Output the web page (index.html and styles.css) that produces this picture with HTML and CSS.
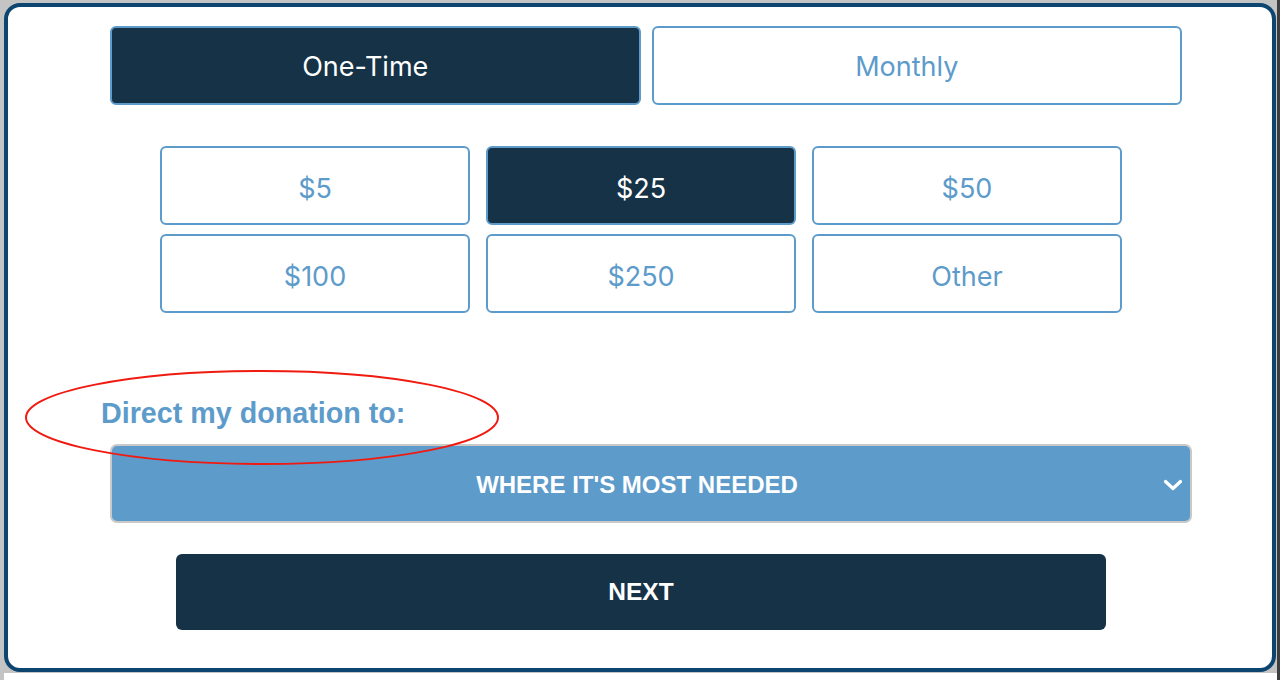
FILE: index.html
```html
<!DOCTYPE html>
<html lang="en">
<head>
<meta charset="utf-8">
<title>Donate</title>
<link rel="stylesheet" href="styles.css">
</head>
<body>
<div class="page">
  <div class="modal">
    <div class="freq">
      <button class="freq-btn is-active">One-Time</button>
      <button class="freq-btn">Monthly</button>
    </div>
    <div class="amounts">
      <button class="amount">$5</button>
      <button class="amount is-active">$25</button>
      <button class="amount">$50</button>
      <button class="amount">$100</button>
      <button class="amount">$250</button>
      <button class="amount">Other</button>
    </div>
    <div class="label">Direct my donation to:</div>
    <div class="select">
      <span class="select-text">WHERE IT'S MOST NEEDED</span>
      <svg class="chevron" width="20" height="12" viewBox="0 0 20 12"><path d="M2.5 2.5 L10 9.5 L17.5 2.5" fill="none" stroke="#fff" stroke-width="3.2" stroke-linecap="round" stroke-linejoin="round"/></svg>
    </div>
    <button class="next">NEXT</button>
    <svg class="annotation" width="476" height="97" viewBox="0 0 476 97"><ellipse cx="238" cy="48.5" rx="236" ry="46.5" fill="none" stroke="#f01a10" stroke-width="2"/></svg>
  </div>
</div>
</body>
</html>
```
FILE: styles.css
```css
* { box-sizing: border-box; }
html, body { margin: 0; padding: 0; }
body {
  width: 1280px;
  height: 680px;
  overflow: hidden;
  background:
    linear-gradient(to bottom, transparent 0, transparent 673px, #ffffff 673px) 4px 0 / 1273px 680px no-repeat,
    linear-gradient(to right, #c4c4c4 0, #c4c4c4 1277px, #3e3e3e 1277px);
  font-family: Inter, "Liberation Sans", sans-serif;
}
.page {
  padding: 3px 4px 0 4px;
}
.modal {
  position: relative;
  width: 1272px;
  height: 669px;
  background: #fff;
  border: 4px solid #0c4670;
  border-radius: 16px;
  padding-top: 19px;
}
button {
  font-family: inherit;
  cursor: pointer;
}
.freq {
  display: flex;
  gap: 11px;
  margin-left: 102px;
  width: 1072px;
}
.freq-btn {
  flex: 1;
  height: 79px;
  border: 2px solid #5d9bcb;
  border-radius: 6px;
  background: #fff;
  color: #5d9bcb;
  font-size: 27px;
  font-weight: 400;
  padding: 2px 20px 0 0;
}
.freq-btn.is-active {
  background: #163247;
  color: #fff;
}
.amounts {
  display: grid;
  grid-template-columns: repeat(3, 310px);
  grid-auto-rows: 79px;
  column-gap: 16px;
  row-gap: 9px;
  margin: 41px 0 0 152px;
}
.amount {
  border: 2px solid #5d9bcb;
  border-radius: 6px;
  background: #fff;
  color: #5d9bcb;
  font-size: 27px;
  padding: 5px 0 0 0;
}
.amount.is-active {
  background: #163247;
  color: #fff;
}
.label {
  margin: 84px 0 0 93px;
  font-family: "Liberation Sans", Arial, sans-serif;
  font-weight: 700;
  font-size: 28.7px;
  line-height: 32px;
  color: #5d9bcb;
}
.select {
  position: relative;
  display: flex;
  align-items: center;
  justify-content: center;
  margin: 15px 0 0 102px;
  width: 1082px;
  height: 79px;
  background: #5d9bcb;
  border: 2px solid #c9c9c9;
  border-radius: 7px;
  padding: 2px 28px 0 0;
}
.select-text {
  font-family: "Liberation Sans", Arial, sans-serif;
  font-weight: 700;
  font-size: 24px;
  color: #fff;
}
.chevron {
  position: absolute;
  right: 7px;
  top: 33px;
}
.next {
  display: block;
  margin: 31px 0 0 168px;
  width: 930px;
  height: 76px;
  background: #163247;
  border: none;
  border-radius: 6px;
  color: #fff;
  font-family: "Liberation Sans", Arial, sans-serif;
  font-weight: 700;
  font-size: 24.5px;
}
.annotation {
  position: absolute;
  left: 16px;
  top: 362px;
  pointer-events: none;
}
```
